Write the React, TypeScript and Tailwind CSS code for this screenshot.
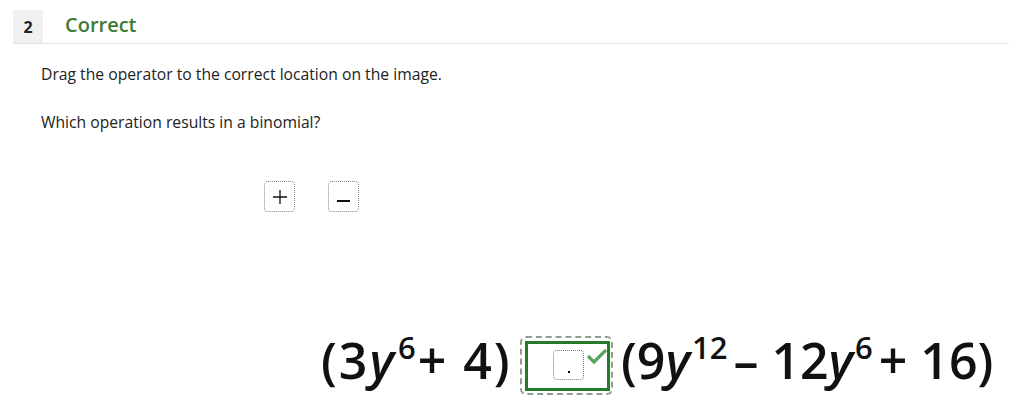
import React from "react";

const Sup = ({ children }: { children: React.ReactNode }) => (
  <span className="text-[31px] leading-none self-start mt-[2px] ml-[2px]">{children}</span>
);

export default function App() {
  return (
    <div className="w-[1009px] h-[403px] bg-white overflow-hidden" style={{ fontFamily: '"Open Sans", sans-serif' }}>
      <div className="pt-[10px] pl-[13px]">
        <div className="flex items-stretch border-b border-[#e3e3e3] h-[34px]">
          <div className="w-[30px] bg-[#f0f0f0] flex items-center justify-center text-[16px] font-bold text-[#222]">2</div>
          <div className="pl-[22px] flex items-center text-[20px] font-semibold text-[#3f7a35] leading-none pb-[4px]">Correct</div>
        </div>
      </div>
      <div className="pl-[41px] text-[15.7px] text-[#222]">
        <p className="mt-[20px] leading-[20px]">Drag the operator to the correct location on the image.</p>
        <p className="mt-[28px] leading-[20px]">Which operation results in a binomial?</p>
      </div>
      <div className="flex gap-[33px] pl-[264px] mt-[49px]">
        <div className="w-[31px] h-[31px] border border-dotted border-[#888] rounded-[4px] flex items-center justify-center">
          <svg width="14" height="14" viewBox="0 0 14 14"><path d="M7 0v14M0 7h14" stroke="#111" strokeWidth="1.3" /></svg>
        </div>
        <div className="w-[31px] h-[31px] border border-dotted border-[#888] rounded-[4px] flex items-end justify-center pb-[9px]">
          <div className="w-[13px] h-[2px] bg-[#111]" />
        </div>
      </div>
      <div className="flex items-start pl-[321px] mt-[118px] text-[#111]" style={{ fontFamily: '"Open Sans", sans-serif', fontWeight: 600 }}>
        <div className="flex items-start text-[50px] leading-[60px] tracking-[2px] w-[199px] shrink-0">
          <span>(3</span><span className="italic">y</span><Sup>6</Sup><span>+ 4)</span>
        </div>
        <div className="relative w-[93px] h-[59px] shrink-0 mt-[6px] border-2 border-dashed border-[#8f9f8f] rounded-[6px]">
          <div className="absolute left-[3px] top-[3px] w-[85px] h-[50px] border-[3.5px] border-[#267a2a]" />
          <div className="absolute left-[31px] top-[12px] w-[31px] h-[30px] border border-dotted border-[#777] rounded-[4px] bg-white flex items-end justify-center pb-[6px]">
            <div className="w-[2px] h-[2px] bg-black" />
          </div>
          <svg className="absolute left-[64px] top-[9px]" width="22" height="18" viewBox="0 0 22 18"><path d="M2 9l6 6L20 3" fill="none" stroke="#5aa55a" strokeWidth="3.2" /></svg>
        </div>
        <div className="flex items-start text-[50px] leading-[60px] ml-[8px] shrink-0">
          <span>(9</span><span className="italic">y</span><Sup>12</Sup><span className="ml-[6px]">– 12</span><span className="italic">y</span><Sup>6</Sup><span className="ml-[6px]">+ 16)</span>
        </div>
      </div>
    </div>
  );
}
